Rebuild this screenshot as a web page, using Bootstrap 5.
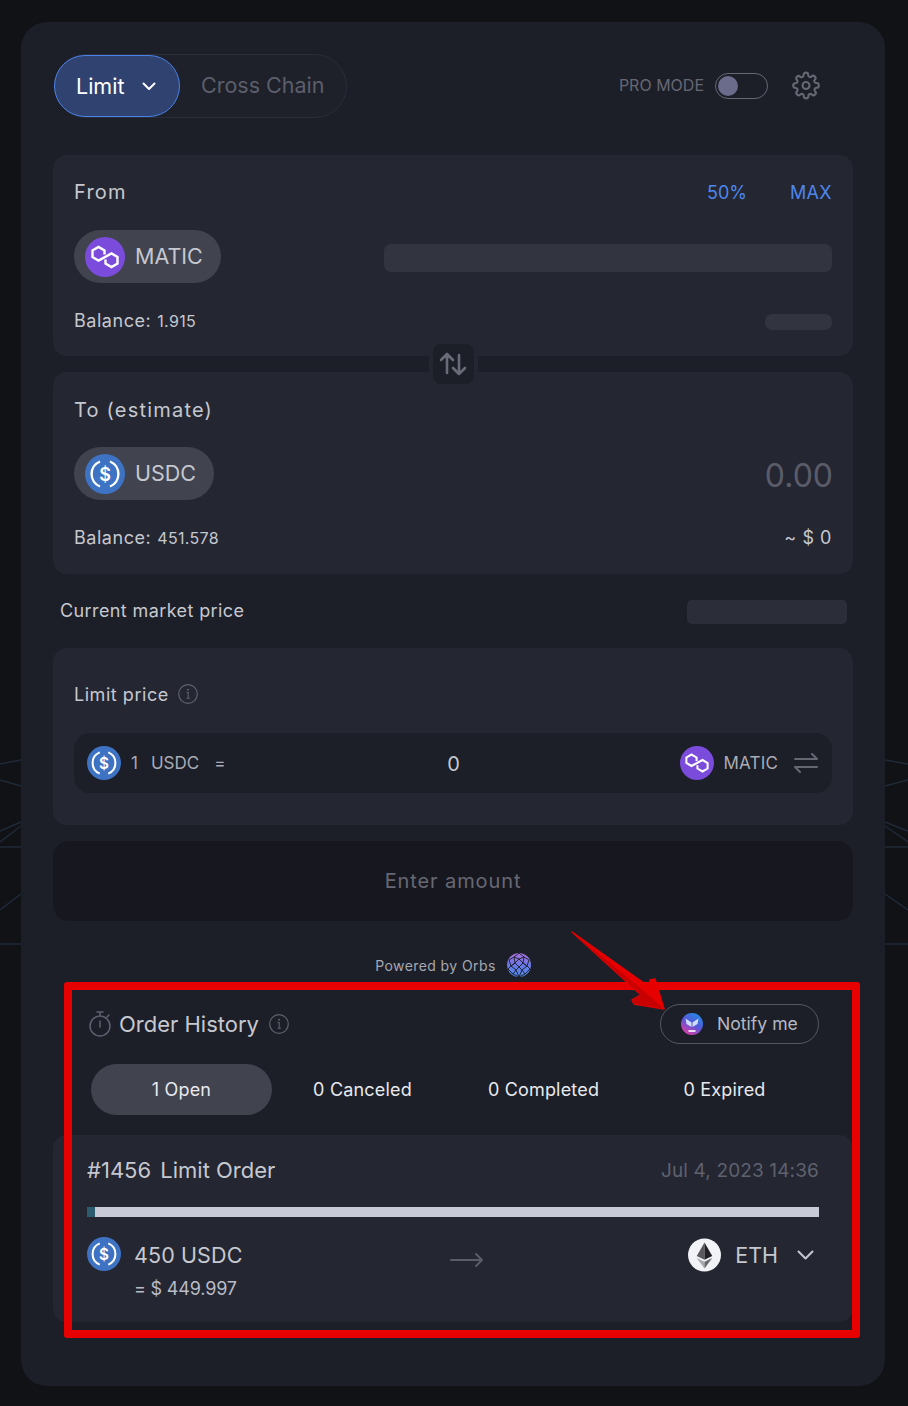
<!DOCTYPE html>
<html lang="en">
<head>
  <meta charset="UTF-8" />
  <meta name="viewport" content="width=device-width, initial-scale=1" />
  <title>Limit order</title>
  <link href="https://cdn.jsdelivr.net/npm/bootstrap@5.3.0/dist/css/bootstrap.min.css" rel="stylesheet" />
  <style>
    body { background: #111216; font-family: Inter, "Liberation Sans", sans-serif; color: #c6c8d0; position: relative; width: 908px; height: 1406px; overflow: hidden; }
    .bg-lines { position: absolute; left: 0; top: 0; }
    .swap-panel { position: absolute; left: 21px; top: 22px; width: 864px; height: 1364px; background: #1c1f27; border-radius: 26px; padding: 32px; }
    .mode-tabs { width: 293px; height: 64px; margin-left: 1px; border: 1px solid #2a2d3a; border-radius: 32px; background: #1e212a; }
    .mode-active { width: 126px; height: 62px; margin-left: -1px; background: #2f4270; border: 1px solid #4a82e8; border-radius: 31px; color: #fff; font-size: 21.5px; padding-left: 21px; gap: 18px; }
    .mode-other { font-size: 21.5px; color: #5c5e6b; padding-left: 21px; margin-bottom: 2px; }
    .pro-label { font-size: 16px; color: #666773; margin: 0 11px 2px 0; }
    .pro-switch { width: 53px; height: 26px; border: 1px solid #666878; border-radius: 13px; padding: 2px; margin-right: 24px; }
    .pro-knob { width: 20px; height: 20px; border-radius: 50%; background: #6b6c8c; }
    .gear-box { margin: 0 33px 1px 0; }
    .box-card { background: #242631; border-radius: 14px; }
    .token-card { padding: 20px 21px 23px; }
    .token-top { height: 34px; font-size: 20px; letter-spacing: .06em; }
    .to-label { padding-top: 2px; }
    .pct-link { color: #4d86ee; font-size: 18px; letter-spacing: .02em; }
    .pct-half { letter-spacing: 0; }
    .token-pill { height: 53px; background: #41434f; border-radius: 27px; padding: 0 18px 0 11px; gap: 10px; font-size: 21.5px; letter-spacing: 0; }
    .token-mid { margin-top: 21px; }
    .token-bottom { height: 24px; margin-top: 26px; font-size: 18px; letter-spacing: .03em; }
    .text-up { margin-bottom: 2px; }
    .bal-num { font-size: 16px; margin-left: 6px; letter-spacing: .02em; }
    .skel { background: #32343f; border-radius: 7px; margin-top: 2px; }
    .skel-amount { width: 448px; height: 28px; }
    .skel-bal { width: 67px; height: 16px; }
    .skel-market { width: 160px; height: 24px; background: #2b2e38; border-radius: 5px; margin-top: 2px; }
    .zero-amount { font-size: 32px; color: #5a5c69; margin: 4px -1px 0 0; }
    .swap-btn { position: absolute; left: 408px; top: 318px; width: 49px; height: 48px; background: #1c1f27; border: 4px solid #242631; border-radius: 12px; padding-right: 2px; }
    .market-row { height: 74px; margin: 0 6px 0 7px; font-size: 18px; letter-spacing: .022em; }
    .limit-card { height: 177px; padding: 32px 21px; }
    .limit-label { height: 28px; font-size: 18px; letter-spacing: .03em; gap: 9px; margin-bottom: 25px; }
    .limit-row { height: 60px; background: #1c1f27; border-radius: 16px; padding: 0 14px 0 13px; font-size: 17px; color: #a9abb6; }
    .limit-side { flex: 1 1 0; }
    .limit-text { margin-top: 2px; }
    .limit-zero { font-size: 20px; color: #c6c8d0; margin: 2px 0 0 2px; }
    .enter-btn { height: 80px; width: 100%; background: #17181f; border: 0; border-radius: 16px; margin-top: 16px; font-size: 20px; letter-spacing: .045em; color: #676873; }
    .powered { height: 24px; margin-top: 32px; font-size: 14px; letter-spacing: .03em; color: #a6a8b3; gap: 11px; }
    .hist-head { margin-top: 27px; height: 40px; padding: 0 34px 0 36px; }
    .hist-title { font-size: 22px; color: #c6c8d0; margin: 0 10px 0 8px; }
    .notify-pill { width: 159px; height: 40px; border: 1px solid #555764; border-radius: 20px; background: none; color: #b5b7c2; font-size: 17.6px; gap: 14px; padding-left: 20px; }
    .status-tabs { display: grid; grid-template-columns: repeat(4, 1fr); margin: 20px 38px 0; height: 51px; font-size: 18px; letter-spacing: .01em; color: #e8e9ee; }
    .status-open { background: #41434f; border-radius: 26px; }
    .order-card { height: 187px; margin-top: 20px; padding: 20px 34px; }
    .order-head { height: 30px; }
    .order-title { font-size: 22px; }
    .order-title span { margin-left: 3px; }
    .order-date { font-size: 19px; letter-spacing: .007em; color: #5f616e; margin-top: 2px; }
    .fill-track { height: 10px; margin-top: 22px; background: #c8cad8; }
    .fill-done { height: 10px; background: #2c5a6e; }
    .order-body { margin-top: 20px; }
    .order-side { flex: 1 1 0; }
    .order-amount { height: 36px; font-size: 21.5px; letter-spacing: .005em; line-height: 36px; margin-left: 13px; }
    .order-usd { height: 24px; margin: 4px 0 0 13px; font-size: 18px; letter-spacing: -.01em; line-height: 24px; color: #b9bbc6; }
    .order-arrow { margin: 15px 0 0 33px; }
    .order-to { gap: 14px; font-size: 21.5px; padding-right: 5px; height: 36px; }
    .red-box { position: absolute; left: 43px; top: 960px; width: 796px; height: 356px; border: 8px solid #e60000; border-radius: 3px; pointer-events: none; }
    .red-arrow { position: absolute; left: 0; top: 0; pointer-events: none; }
  </style>
</head>
<body>
  <!-- lines behind the panel -->
  <svg class="bg-lines" width="908" height="1406" fill="none" stroke="#1f2a38" stroke-width="1.5">
    <path d="M0 764L21 760M0 780L21 786M0 831L21 822M0 842L21 826M0 847H21M0 910L21 894M0 944H21" />
    <path d="M908 764L885 760M908 780L885 786M908 831L885 822M908 842L885 826M908 847H885M908 910L885 894M908 944H885" />
  </svg>

  <div class="swap-panel">
    <!-- header -->
    <div class="d-flex align-items-center justify-content-between">
      <div class="mode-tabs d-flex align-items-center">
        <div class="mode-active d-flex align-items-center">
          Limit
          <svg width="14" height="9" viewBox="0 0 14 9" fill="none" stroke="#fff" stroke-width="2" stroke-linecap="round" stroke-linejoin="round"><path d="M1.5 1.5L7 7l5.5-5.5" /></svg>
        </div>
        <div class="mode-other">Cross Chain</div>
      </div>
      <div class="d-flex align-items-center">
        <span class="pro-label">PRO MODE</span>
        <div class="pro-switch"><div class="pro-knob"></div></div>
        <div class="gear-box d-flex">
          <svg width="28" height="29" viewBox="0 0 24 24" fill="none" stroke="#666773" stroke-width="1.8" stroke-linecap="round" stroke-linejoin="round"><circle cx="12" cy="12" r="3" /><path d="M19.4 15a1.65 1.65 0 0 0 .33 1.82l.06.06a2 2 0 0 1-2.83 2.83l-.06-.06a1.65 1.65 0 0 0-2.82 1.17V21a2 2 0 0 1-4 0v-.09A1.65 1.65 0 0 0 7.2 19.74l-.06.06a2 2 0 0 1-2.83-2.83l.06-.06A1.65 1.65 0 0 0 3.2 14.1H3a2 2 0 0 1 0-4h.09A1.65 1.65 0 0 0 4.26 7.3l-.06-.06a2 2 0 0 1 2.83-2.83l.06.06A1.65 1.65 0 0 0 9.9 3.3V3a2 2 0 0 1 4 0v.09a1.65 1.65 0 0 0 2.8 1.17l.06-.06a2 2 0 0 1 2.83 2.83l-.06.06A1.65 1.65 0 0 0 20.8 9.9H21a2 2 0 0 1 0 4h-.09a1.65 1.65 0 0 0-1.51 1.1z" /></svg>
        </div>
      </div>
    </div>

    <!-- from -->
    <div class="box-card token-card" style="margin-top:37px">
      <div class="token-top d-flex align-items-center justify-content-between">
        <span>From</span>
        <div class="d-flex" style="gap:43px"><span class="pct-link pct-half">50%</span><span class="pct-link">MAX</span></div>
      </div>
      <div class="token-mid d-flex align-items-center justify-content-between">
        <div class="token-pill d-inline-flex align-items-center">
          <svg width="40" height="40" viewBox="0 0 40 40">
            <circle cx="20" cy="20" r="20" fill="#7b4bdc" />
            <path d="M19.500 17.500V13.500L13.500 10L7.500 13.500V20L13.500 23.500L26.500 16.500L32.500 20V26.500L26.500 30L20.500 26.500V22.500" fill="none" stroke="#fff" stroke-width="2.400" />
          </svg>
          MATIC
        </div>
        <div class="skel skel-amount"></div>
      </div>
      <div class="token-bottom d-flex align-items-center justify-content-between">
        <span class="text-up">Balance:<span class="bal-num">1.915</span></span>
        <div class="skel skel-bal"></div>
      </div>
    </div>

    <!-- to -->
    <div class="box-card token-card" style="margin-top:16px;padding-bottom:24px">
      <div class="token-top to-label d-flex align-items-center">To (estimate)</div>
      <div class="token-mid d-flex align-items-center justify-content-between">
        <div class="token-pill d-inline-flex align-items-center">
          <svg width="40" height="40" viewBox="0 0 40 40">
            <circle cx="20" cy="20" r="20" fill="#3e73c4" />
            <path d="M15 7.500a13.500 13.500 0 0 0 0 25M25 7.500a13.500 13.500 0 0 1 0 25" fill="none" stroke="#fff" stroke-width="2.400" />
            <text x="20" y="26.500" text-anchor="middle" font-family="Inter, sans-serif" font-size="18" font-weight="600" fill="#fff">$</text>
          </svg>
          USDC
        </div>
        <span class="zero-amount">0.00</span>
      </div>
      <div class="token-bottom d-flex align-items-center justify-content-between">
        <span class="text-up">Balance:<span class="bal-num">451.578</span></span>
        <span class="text-up">~ $ 0</span>
      </div>
    </div>

    <div class="swap-btn d-flex align-items-center justify-content-center">
      <svg width="28" height="26" viewBox="0 0 28 26" fill="none" stroke="#6a6b78" stroke-width="2.6" stroke-linecap="round" stroke-linejoin="round"><path d="M8 22V3M2 9l6-6 6 6M20 4v19M14 17l6 6 6-6" /></svg>
    </div>

    <!-- market price -->
    <div class="market-row d-flex align-items-center justify-content-between">
      <span class="text-up">Current market price</span>
      <div class="skel-market"></div>
    </div>

    <!-- limit price -->
    <div class="box-card limit-card">
      <div class="limit-label d-flex align-items-center">
        Limit price
        <svg width="20" height="20" viewBox="0 0 20 20">
          <circle cx="10" cy="10" r="9.300" fill="none" stroke="#5f6170" stroke-width="1.200" />
          <circle cx="10" cy="5.800" r="1" fill="#5f6170" />
          <path d="M8.500 8.500H10.200V14M8.500 14.300h3.500" fill="none" stroke="#5f6170" stroke-width="1.100" />
        </svg>
      </div>
      <div class="limit-row d-flex align-items-center">
        <div class="limit-side d-flex align-items-center">
          <svg width="34" height="34" viewBox="0 0 40 40">
            <circle cx="20" cy="20" r="20" fill="#3e73c4" />
            <path d="M15 7.500a13.500 13.500 0 0 0 0 25M25 7.500a13.500 13.500 0 0 1 0 25" fill="none" stroke="#fff" stroke-width="2.400" />
            <text x="20" y="26.500" text-anchor="middle" font-family="Inter, sans-serif" font-size="18" font-weight="600" fill="#fff">$</text>
          </svg>
          <span class="limit-text" style="margin-left:10px">1</span>
          <span class="limit-text" style="margin-left:13px">USDC</span>
          <span class="limit-text" style="margin-left:15px">=</span>
        </div>
        <span class="limit-zero">0</span>
        <div class="limit-side d-flex align-items-center justify-content-end">
          <svg width="34" height="34" viewBox="0 0 40 40">
            <circle cx="20" cy="20" r="20" fill="#7b4bdc" />
            <path d="M19.500 17.500V13.500L13.500 10L7.500 13.500V20L13.500 23.500L26.500 16.500L32.500 20V26.500L26.500 30L20.500 26.500V22.500" fill="none" stroke="#fff" stroke-width="2.400" />
          </svg>
          <span class="limit-text" style="margin-left:10px;letter-spacing:.01em">MATIC</span>
          <svg style="margin-left:16px" width="24" height="20" viewBox="0 0 24 20" fill="none" stroke="#666773" stroke-width="2" stroke-linecap="round" stroke-linejoin="round"><path d="M1 6h22M18 1l5 5M23 14H1M6 19l-5-5" /></svg>
        </div>
      </div>
    </div>

    <button class="enter-btn" type="button">Enter amount</button>

    <div class="powered d-flex align-items-center justify-content-center">
      Powered by Orbs
      <svg width="24" height="24" viewBox="0 0 24 24">
        <defs><linearGradient id="orbs-grad" x1="0" y1="0" x2="0" y2="1"><stop offset="0" stop-color="#a870d8" /><stop offset=".5" stop-color="#6a78e6" /><stop offset="1" stop-color="#4e8ae8" /></linearGradient></defs>
        <circle cx="12" cy="12" r="12" fill="url(#orbs-grad)" />
        <path d="M12 0L7 4l5 2 5-2zM7 4L2 7l2 6 4-3zM17 4l5 3-2 6-4-3zM12 6L8 10l4 4 4-4zM8 10l-4 3 5 4 3-3M16 10l4 3-5 4-3-3M4 13l-3 3 5 5 3-4M20 13l3 3-5 5-3-4M9 17l3 7 3-7M6 21l6 3 6-3" fill="none" stroke="#1a1d28" stroke-width=".9" />
      </svg>
    </div>

    <!-- order history -->
    <div class="hist-head d-flex align-items-center justify-content-between">
      <div class="d-flex align-items-center">
        <svg width="22" height="26" viewBox="0 0 22 26" fill="none" stroke="#5f6170" stroke-width="1.500" stroke-linecap="round"><circle cx="11" cy="15" r="10" /><path d="M8 1h6M11 1v4M18 6l2-2M11 10v6" /></svg>
        <span class="hist-title">Order History</span>
        <svg width="20" height="20" viewBox="0 0 20 20">
          <circle cx="10" cy="10" r="9.300" fill="none" stroke="#5f6170" stroke-width="1.200" />
          <circle cx="10" cy="5.800" r="1" fill="#5f6170" />
          <path d="M8.500 8.500H10.200V14M8.500 14.300h3.500" fill="none" stroke="#5f6170" stroke-width="1.100" />
        </svg>
      </div>
      <button class="notify-pill d-flex align-items-center" type="button">
        <svg width="22" height="22" viewBox="0 0 22 22">
          <defs><linearGradient id="dapp-grad" x1=".8" y1="0" x2=".2" y2="1"><stop offset="0" stop-color="#1f8fe8" /><stop offset=".5" stop-color="#5a55d8" /><stop offset="1" stop-color="#e83aa0" /></linearGradient></defs>
          <circle cx="11" cy="11" r="11" fill="url(#dapp-grad)" />
          <path d="M10.500 9.500L4.500 5.500L5.500 11L10.500 14zM11.500 9.500L17.500 5.500L16.500 11L11.500 14z" fill="#cfdffb" />
          <path d="M7.500 17h7v2h-7z" fill="#fff" opacity=".8" />
        </svg>
        Notify me
      </button>
    </div>

    <div class="status-tabs">
      <div class="status-open d-flex align-items-center justify-content-center">1 Open</div>
      <div class="d-flex align-items-center justify-content-center">0 Canceled</div>
      <div class="d-flex align-items-center justify-content-center">0 Completed</div>
      <div class="d-flex align-items-center justify-content-center">0 Expired</div>
    </div>

    <div class="box-card order-card">
      <div class="order-head d-flex align-items-center justify-content-between">
        <div class="order-title">#1456 <span>Limit Order</span></div>
        <span class="order-date">Jul 4, 2023 14:36</span>
      </div>
      <div class="fill-track"><div class="fill-done" style="width:1.1%"></div></div>
      <div class="order-body d-flex">
        <div class="order-side d-flex">
          <svg width="34" height="34" viewBox="0 0 40 40">
            <circle cx="20" cy="20" r="20" fill="#3e73c4" />
            <path d="M15 7.500a13.500 13.500 0 0 0 0 25M25 7.500a13.500 13.500 0 0 1 0 25" fill="none" stroke="#fff" stroke-width="2.400" />
            <text x="20" y="26.500" text-anchor="middle" font-family="Inter, sans-serif" font-size="18" font-weight="600" fill="#fff">$</text>
          </svg>
          <div>
            <div class="order-amount">450 USDC</div>
            <div class="order-usd">= $ 449.997</div>
          </div>
        </div>
        <div class="order-arrow d-flex">
          <svg width="34" height="16" viewBox="0 0 34 16" fill="none" stroke="#5a5c69" stroke-width="2" stroke-linecap="round" stroke-linejoin="round"><path d="M1 8h31M26 2l6 6-6 6" /></svg>
        </div>
        <div class="order-side order-to d-flex align-items-center justify-content-end">
          <svg width="33" height="34" viewBox="0 0 34 34">
            <circle cx="17" cy="17" r="17" fill="#f2f3f6" />
            <path d="M17 4l-8 14 8 4z" fill="#5a5a5e" /><path d="M17 4l8 14-8 4z" fill="#222226" />
            <path d="M9 20l8 11v-7z" fill="#a8a8ac" /><path d="M25 20l-8 11v-7z" fill="#68686c" />
          </svg>
          ETH
          <svg style="margin-left:5px" width="17" height="10" viewBox="0 0 17 10" fill="none" stroke="#c6c8d0" stroke-width="2" stroke-linecap="round" stroke-linejoin="round"><path d="M1.500 1.500L8.500 8.500l7-7" /></svg>
        </div>
      </div>
    </div>

    <div class="red-box"></div>
  </div>

  <!-- annotation arrow -->
  <svg class="red-arrow" width="908" height="1406">
    <path d="M572 932L651 988L650 980L655 979L664 1009L634 1004L632 1000L641 995Z" fill="#e60000" stroke="#e60000" stroke-width="1.500" stroke-linejoin="round" />
    <path d="M572 932L641 995L632 1000L634 1004L664 1009L645 992Z" fill="#c80000" />
  </svg>

  <script src="https://cdn.jsdelivr.net/npm/bootstrap@5.3.0/dist/js/bootstrap.bundle.min.js"></script>
</body>
</html>
